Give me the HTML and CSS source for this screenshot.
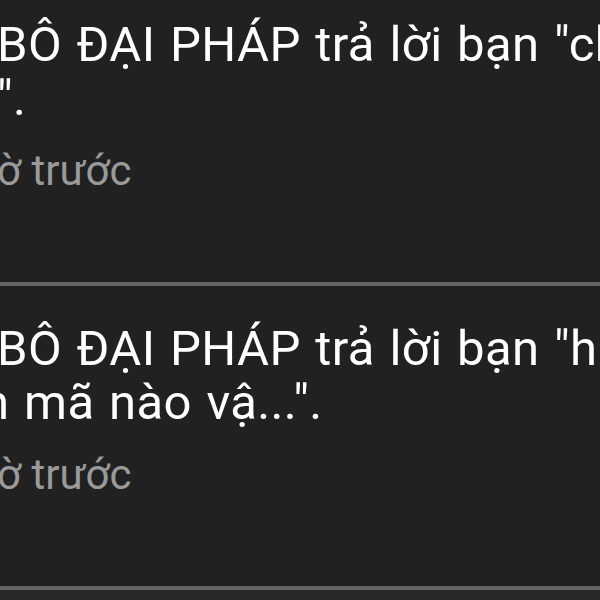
FILE: index.html
```html
<!DOCTYPE html>
<html lang="vi">
<head>
  <meta charset="UTF-8" />
  <meta name="viewport" content="width=device-width, initial-scale=1.0"/>
  <title>Thông báo</title>
  <link rel="stylesheet" href="styles.css">
</head>
<body>

<ul class="notif-list">
  <li class="notif">
    <p class="notif-text">
      <span class="line">BÔ ĐẠI PHÁP trả lời bạn "ch</span>
      <span class="line">".</span>
    </p>
    <p class="notif-time">ờ trước</p>
  </li>

  <li class="notif">
    <p class="notif-text">
      <span class="line">BÔ ĐẠI PHÁP trả lời bạn "ha</span>
      <span class="line line-cut">n mã nào vậ...".</span>
    </p>
    <p class="notif-time">ờ trước</p>
  </li>

  <li class="notif notif-unread">
    <p class="notif-text">
      <span class="line">BÔ ĐẠI PHÁP trả lời bạn</span>
    </p>
  </li>
</ul>

</body>
</html>
```

FILE: styles.css
```css
/* Notification list */
:root {
  --bg-color: #212121;
  --unread-bg: #292929;
  --divider: #646464;
  --text-color: #ffffff;
  --muted-color: #9a9a9a;
  --font-family: 'Roboto', 'Noto Sans', sans-serif;
}

* {
  box-sizing: border-box;
  margin: 0;
  padding: 0;
}

html, body {
  overflow: hidden;
}

body {
  background: var(--bg-color);
  color: var(--text-color);
  font-family: var(--font-family);
  width: 600px;
  height: 600px;
}

.notif-list {
  list-style: none;
  margin-top: -18px;
  margin-left: -3px;
}

.notif {
  padding: 36px 0 86px;
  border-bottom: 4px solid var(--divider);
}

.notif-unread {
  background: var(--unread-bg);
  border-bottom: none;
}

.notif-text {
  font-size: 49px;
  line-height: 54px;
  letter-spacing: 0.4px;
  word-spacing: 2px;
}

.notif-text .line {
  display: block;
  white-space: nowrap;
}

/* second line starts mid-word, cut by the screen edge */
.notif-text .line-cut {
  margin-left: -15px;
}

.notif-time {
  margin-top: 20px;
  font-size: 42px;
  line-height: 50px;
  color: var(--muted-color);
  white-space: nowrap;
}
```
